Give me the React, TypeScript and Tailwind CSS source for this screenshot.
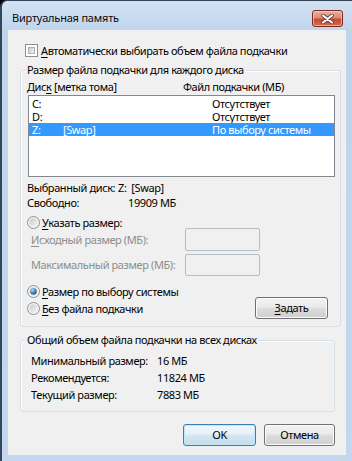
import React from "react";

const FONT = "font-['Noto_Sans','Liberation_Sans',sans-serif]";

function Checkbox() {
  return (
    <div className="w-[13px] h-[13px] border border-[#8e8f8f] bg-white p-[2px] shrink-0">
      <div className="w-full h-full bg-[linear-gradient(135deg,#cbcbcb,#f4f4f4)] border border-[#b0b0b0]" />
    </div>
  );
}

function Radio({ checked = false }: { checked?: boolean }) {
  return (
    <svg width="13" height="13" viewBox="0 0 13 13" className="shrink-0">
      <defs>
        <linearGradient id="rg-in" x1="0" y1="0" x2="1" y2="1">
          <stop offset="0" stopColor="#c8c8c8" />
          <stop offset="1" stopColor="#f7f7f7" />
        </linearGradient>
        <radialGradient id="rg-dot" cx="0.35" cy="0.3" r="0.8">
          <stop offset="0" stopColor="#b5e3ff" />
          <stop offset="0.5" stopColor="#3d8ac4" />
          <stop offset="1" stopColor="#1b4d78" />
        </radialGradient>
      </defs>
      <circle cx="6.5" cy="6.5" r="6" fill="#f4f4f4" stroke="#8e8f8f" strokeWidth="1" />
      <circle cx="6.5" cy="6.5" r="4.2" fill="url(#rg-in)" />
      {checked && <circle cx="6.5" cy="6.5" r="3.2" fill="url(#rg-dot)" />}
    </svg>
  );
}

function WinButton({
  children,
  def = false,
  w,
}: {
  children: React.ReactNode;
  def?: boolean;
  w: string;
}) {
  const base =
    "h-[22px] rounded-[3px] border flex items-center justify-center leading-[14px] shrink-0 whitespace-nowrap";
  const look = def
    ? "border-[#3c7fb1] bg-[linear-gradient(to_bottom,#f2f8fc_0%,#e8f1f8_45%,#d6e6f2_50%,#c6dced_100%)] shadow-[inset_0_0_0_1px_#bfe6fb]"
    : "border-[#707070] bg-[linear-gradient(to_bottom,#f2f2f2_0%,#ebebeb_45%,#dddddd_50%,#cfcfcf_100%)] shadow-[inset_0_0_0_1px_#fcfcfc]";
  return <div className={`${base} ${look} ${w}`}>{children}</div>;
}

function U({ children }: { children: React.ReactNode }) {
  return <span className="underline underline-offset-[2px] decoration-[1px]">{children}</span>;
}

export default function App() {
  return (
    <div className={`w-[352px] h-[461px] bg-black overflow-hidden ${FONT} text-[11px] tracking-[-0.4px] text-black whitespace-nowrap`}>
      <div className="w-full h-full rounded-tl-[7px] border-l-2 border-t border-[#34465a] bg-[linear-gradient(to_bottom,#d3e2f3_0px,#c0d5ec_30px,#c3d7ee_100%)] flex flex-col pl-[6px] pr-[6px] pb-[6px]">
        {/* Title bar */}
        <div className="h-[29px] flex items-start shrink-0">
          <span className="mt-[9px] ml-[4px] leading-[16px] text-[#0b0b0b] tracking-[-0.2px]">Виртуальная память</span>
          <div className="ml-auto mt-[9px] mr-[3px] w-[31px] h-[17px] rounded-[3px] border border-[#7a2a20] bg-[linear-gradient(to_bottom,#eab0a3_0%,#dc8a78_45%,#c74a33_55%,#d56a4e_100%)] shadow-[inset_0_0_0_1px_rgba(255,220,210,0.6)] flex items-center justify-center">
            <svg width="13" height="10" viewBox="0 0 13 10">
              <path d="M2 1.5 L11 8.5 M11 1.5 L2 8.5" stroke="#5a3a36" strokeWidth="3.6" strokeLinecap="round" />
              <path d="M2 1.5 L11 8.5 M11 1.5 L2 8.5" stroke="#ffffff" strokeWidth="2.1" strokeLinecap="round" />
            </svg>
          </div>
        </div>

        {/* Content */}
        <div className="flex-1 bg-[#f0f0f0] flex flex-col">
          {/* Auto checkbox */}
          <div className="mt-[14px] h-[13px] flex items-center ml-[17px] gap-[3px]">
            <Checkbox />
            <span className="leading-[13px]">
              <U>А</U>втоматически выбирать объем файла подкачки
            </span>
          </div>

          {/* Group 1 */}
          <div className="relative mt-[13px] ml-[12px] w-[321px] h-[257px] shrink-0 rounded-[3px] border border-[#d5dfe5] shadow-[inset_1px_1px_0_#ffffff] flex flex-col">
            <span className="absolute left-[5px] -top-[9px] px-[1px] bg-[#f0f0f0] leading-[16px]">
              Размер файла подкачки для каждого диска
            </span>

            <div className="mt-[9px] h-[14px] leading-[14px] flex pl-[6px]">
              <span className="w-[156px] shrink-0">
                Дис<U>к</U> [метка тома]
              </span>
              <span>Файл подкачки (МБ)</span>
            </div>

            <div className="mt-[1px] ml-[7px] w-[307px] h-[82px] border border-[#828790] bg-white pt-[1px] flex flex-col">
              <div className="h-[13px] leading-[13px] flex">
                <span className="pl-[3px] w-[183px] shrink-0">C:</span>
                <span>Отсутствует</span>
              </div>
              <div className="h-[13px] leading-[13px] flex">
                <span className="pl-[3px] w-[183px] shrink-0">D:</span>
                <span>Отсутствует</span>
              </div>
              <div className="h-[13px] leading-[13px] flex bg-[#3399ff] text-white">
                <span className="pl-[3px] w-[34px] shrink-0">Z:</span>
                <span className="w-[149px] shrink-0">[Swap]</span>
                <span>По выбору системы</span>
              </div>
            </div>

            <div className="mt-[3px] h-[15px] leading-[15px] flex pl-[6px]">
              <span className="w-[91px] shrink-0">Выбранный диск:</span>
              <span>Z:&nbsp;&nbsp;[Swap]</span>
            </div>
            <div className="h-[15px] leading-[15px] flex pl-[6px]">
              <span className="w-[101px] shrink-0">Свободно:</span>
              <span>19909 МБ</span>
            </div>

            <div className="mt-[6px] h-[12px] flex items-center ml-[6px] gap-[2px]">
              <Radio />
              <span className="leading-[13px]">
                <U>У</U>казать размер:
              </span>
            </div>

            <div className="h-[23px] flex items-center pl-[10px]">
              <span className="w-[154px] shrink-0 text-[#8d8d8d] leading-[14px]">
                <U>И</U>сходный размер (МБ):
              </span>
              <div className="w-[75px] h-[23px] rounded-[2px] border border-[#b5bdc5] bg-[#f0f0f0]" />
            </div>
            <div className="mt-[3px] h-[22px] flex items-center pl-[10px]">
              <span className="w-[154px] shrink-0 text-[#8d8d8d] leading-[14px]">Максимальный размер (МБ):</span>
              <div className="w-[75px] h-[22px] rounded-[2px] border border-[#b5bdc5] bg-[#f0f0f0]" />
            </div>

            <div className="mt-[9px] h-[34px] flex">
              <div className="flex flex-col gap-[4px] ml-[6px]">
                <div className="h-[13px] flex items-center gap-[2px]">
                  <Radio checked />
                  <span className="leading-[13px]">
                    <U>Р</U>азмер по выбору системы
                  </span>
                </div>
                <div className="h-[13px] flex items-center gap-[2px]">
                  <Radio />
                  <span className="leading-[13px]">
                    <U>Б</U>ез файла подкачки
                  </span>
                </div>
              </div>
              <div className="ml-auto mr-[12px] self-end">
                <WinButton w="w-[73px]">
                  <span className="leading-[14px]">
                    <U>З</U>адать
                  </span>
                </WinButton>
              </div>
            </div>
          </div>

          {/* Group 2 */}
          <div className="relative mt-[13px] ml-[12px] w-[315px] h-[72px] shrink-0 rounded-[3px] border border-[#d5dfe5] shadow-[inset_1px_1px_0_#ffffff] flex flex-col pt-[11px]">
            <span className="absolute left-[5px] -top-[9px] px-[1px] bg-[#f0f0f0] leading-[16px]">
              Общий объем файла подкачки на всех дисках
            </span>
            <div className="h-[17px] leading-[17px] flex pl-[10px]">
              <span className="w-[126px] shrink-0">Минимальный размер:</span>
              <span>16 МБ</span>
            </div>
            <div className="h-[17px] leading-[17px] flex pl-[10px]">
              <span className="w-[126px] shrink-0">Рекомендуется:</span>
              <span>11824 МБ</span>
            </div>
            <div className="h-[17px] leading-[17px] flex pl-[10px]">
              <span className="w-[126px] shrink-0">Текущий размер:</span>
              <span>7883 МБ</span>
            </div>
          </div>

          {/* Buttons */}
          <div className="mt-[12px] flex justify-end gap-[8px] mr-[11px]">
            <WinButton def w="w-[73px]">
              OK
            </WinButton>
            <WinButton w="w-[71px]">Отмена</WinButton>
          </div>
        </div>
      </div>
    </div>
  );
}
